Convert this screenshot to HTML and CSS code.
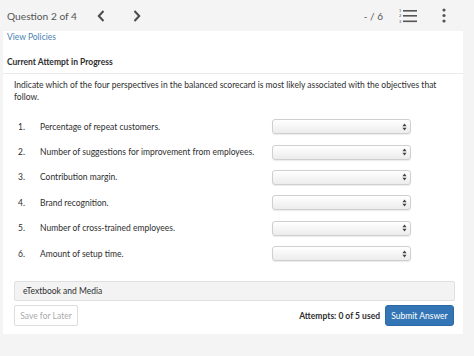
FILE: index.html
```html
<!DOCTYPE html>
<html lang="en">
  <head>
    <meta charset="UTF-8" />
    <meta name="viewport" content="width=device-width, initial-scale=1.0" />
    <title>Question 2 of 4</title>
    <link rel="stylesheet" href="styles.css">
  </head>
  <body>
    <!-- Top bar: question navigation -->
    <div class="topbar">
      <span class="q-title">Question 2 of 4</span>
      <span class="chev">
        <svg width="8" height="12" viewBox="0 0 8 12"><path d="M6.5 1 L1.8 6 L6.5 11" fill="none" stroke="#4a4a4a" stroke-width="2"/></svg>
      </span>
      <span class="chev">
        <svg width="8" height="12" viewBox="0 0 8 12"><path d="M1.5 1 L6.2 6 L1.5 11" fill="none" stroke="#4a4a4a" stroke-width="2"/></svg>
      </span>
      <span class="score">- / 6</span>
      <span class="list-icon">
        <svg width="19" height="15" viewBox="0 0 19 15">
          <text x="0" y="4" font-size="4" fill="#555" font-family="Lato, sans-serif">1</text>
          <text x="0" y="9" font-size="4" fill="#555" font-family="Lato, sans-serif">2</text>
          <text x="0" y="14.5" font-size="4" fill="#555" font-family="Lato, sans-serif">3</text>
          <rect x="4" y="2" width="14" height="1.6" fill="#555"/>
          <rect x="4" y="7" width="14" height="1.6" fill="#555"/>
          <rect x="4" y="12.5" width="14" height="1.6" fill="#555"/>
        </svg>
      </span>
      <span class="kebab">
        <svg width="4" height="15" viewBox="0 0 4 15">
          <circle cx="2" cy="2" r="1.6" fill="#555"/>
          <circle cx="2" cy="7.5" r="1.6" fill="#555"/>
          <circle cx="2" cy="13" r="1.6" fill="#555"/>
        </svg>
      </span>
    </div>

    <!-- Main panel -->
    <div class="panel">
      <a class="policies" href="#">View Policies</a>
      <div class="attempt">Current Attempt in Progress</div>

      <div class="question">
        <p class="prompt">
          Indicate which of the four perspectives in the balanced scorecard is most likely associated with the objectives that
          follow.
        </p>

        <div class="items">
          <div class="item">
            <span class="num">1.</span>
            <span class="label">Percentage of repeat customers.</span>
            <div class="select"><svg width="5" height="8" viewBox="0 0 5 8"><path d="M2.5 0.5 L4.6 3.2 L0.4 3.2 Z M2.5 7.5 L4.6 4.8 L0.4 4.8 Z" fill="#444"/></svg></div>
          </div>
          <div class="item">
            <span class="num">2.</span>
            <span class="label">Number of suggestions for improvement from employees.</span>
            <div class="select"><svg width="5" height="8" viewBox="0 0 5 8"><path d="M2.5 0.5 L4.6 3.2 L0.4 3.2 Z M2.5 7.5 L4.6 4.8 L0.4 4.8 Z" fill="#444"/></svg></div>
          </div>
          <div class="item">
            <span class="num">3.</span>
            <span class="label">Contribution margin.</span>
            <div class="select"><svg width="5" height="8" viewBox="0 0 5 8"><path d="M2.5 0.5 L4.6 3.2 L0.4 3.2 Z M2.5 7.5 L4.6 4.8 L0.4 4.8 Z" fill="#444"/></svg></div>
          </div>
          <div class="item">
            <span class="num">4.</span>
            <span class="label">Brand recognition.</span>
            <div class="select"><svg width="5" height="8" viewBox="0 0 5 8"><path d="M2.5 0.5 L4.6 3.2 L0.4 3.2 Z M2.5 7.5 L4.6 4.8 L0.4 4.8 Z" fill="#444"/></svg></div>
          </div>
          <div class="item">
            <span class="num">5.</span>
            <span class="label">Number of cross-trained employees.</span>
            <div class="select"><svg width="5" height="8" viewBox="0 0 5 8"><path d="M2.5 0.5 L4.6 3.2 L0.4 3.2 Z M2.5 7.5 L4.6 4.8 L0.4 4.8 Z" fill="#444"/></svg></div>
          </div>
          <div class="item">
            <span class="num">6.</span>
            <span class="label">Amount of setup time.</span>
            <div class="select"><svg width="5" height="8" viewBox="0 0 5 8"><path d="M2.5 0.5 L4.6 3.2 L0.4 3.2 Z M2.5 7.5 L4.6 4.8 L0.4 4.8 Z" fill="#444"/></svg></div>
          </div>
        </div>

        <div class="media">eTextbook and Media</div>

        <div class="actions">
          <button class="save">Save for Later</button>
          <span class="attempts">Attempts: 0 of 5 used</span>
          <button class="submit">Submit Answer</button>
        </div>
      </div>
    </div>
  </body>
</html>
```

FILE: styles.css
```css
/* Global */
body {
  margin: 0;
  font-family: Lato, "Open Sans", sans-serif;
  background-color: #f4f4f4;
  color: #2e2e2e;
  font-size: 8.5px;
}

/* Top bar */
.topbar {
  height: 31px;
  display: flex;
  align-items: center;
  padding-left: 7px;
  padding-right: 28px;
}

.q-title {
  font-size: 10.2px;
  color: #555;
  width: 90px;
  flex-shrink: 0;
}

.chev {
  display: flex;
  width: 36px;
}

.score {
  margin-left: auto;
  font-size: 10px;
  color: #555;
  margin-right: 16px;
}

.list-icon {
  display: flex;
  margin-right: 24px;
}

.kebab {
  display: flex;
}

/* Main panel */
.panel {
  margin: 0 11px 0 3px;
  height: 303px;
  background-color: #fff;
  display: flex;
  flex-direction: column;
}

.policies {
  display: block;
  padding: 1px 4px 0;
  line-height: 11px;
  color: #4a7fb3;
  text-decoration: none;
}

.attempt {
  padding: 14px 4px 0;
  height: 31px;
  box-sizing: border-box;
  font-weight: bold;
  border-bottom: 1px solid #eaeaea;
}

.question {
  padding: 0 8px 0 11px;
}

.prompt {
  margin: 5px 0 0;
  line-height: 12px;
}

/* Item rows */
.items {
  margin-top: 11px;
}

.item {
  height: 25.4px;
  display: flex;
  align-items: center;
}

.num {
  width: 22px;
  padding-left: 4px;
}

.label {
  flex: 1;
}

.select {
  width: 134px;
  height: 13px;
  margin-right: 44px;
  border: 1px solid #cfcfcf;
  border-radius: 3px;
  background: linear-gradient(#ffffff, #ececec);
  box-shadow: 0 1px 1px rgba(0, 0, 0, 0.08);
  display: flex;
  align-items: center;
  justify-content: flex-end;
  padding-right: 3px;
}

/* eTextbook bar */
.media {
  margin-top: 15px;
  height: 20px;
  box-sizing: border-box;
  border: 1px solid #e0e0e0;
  border-radius: 2px;
  background-color: #f3f3f3;
  padding-left: 8px;
  display: flex;
  align-items: center;
}

/* Bottom actions */
.actions {
  margin-top: 4px;
  display: flex;
  align-items: center;
}

.save {
  width: 64px;
  height: 21px;
  font-family: inherit;
  font-size: 8.5px;
  color: #aaa;
  background-color: #fff;
  border: 1px solid #ddd;
  border-radius: 2px;
  padding: 0;
}

.attempts {
  margin-left: auto;
  margin-right: 5px;
  font-weight: bold;
}

.submit {
  width: 69px;
  height: 21px;
  margin-right: 1px;
  font-family: inherit;
  font-size: 8.5px;
  color: #fff;
  background-color: #3476b5;
  border: 1px solid #2c68a3;
  border-radius: 3px;
  padding: 0;
}
```
